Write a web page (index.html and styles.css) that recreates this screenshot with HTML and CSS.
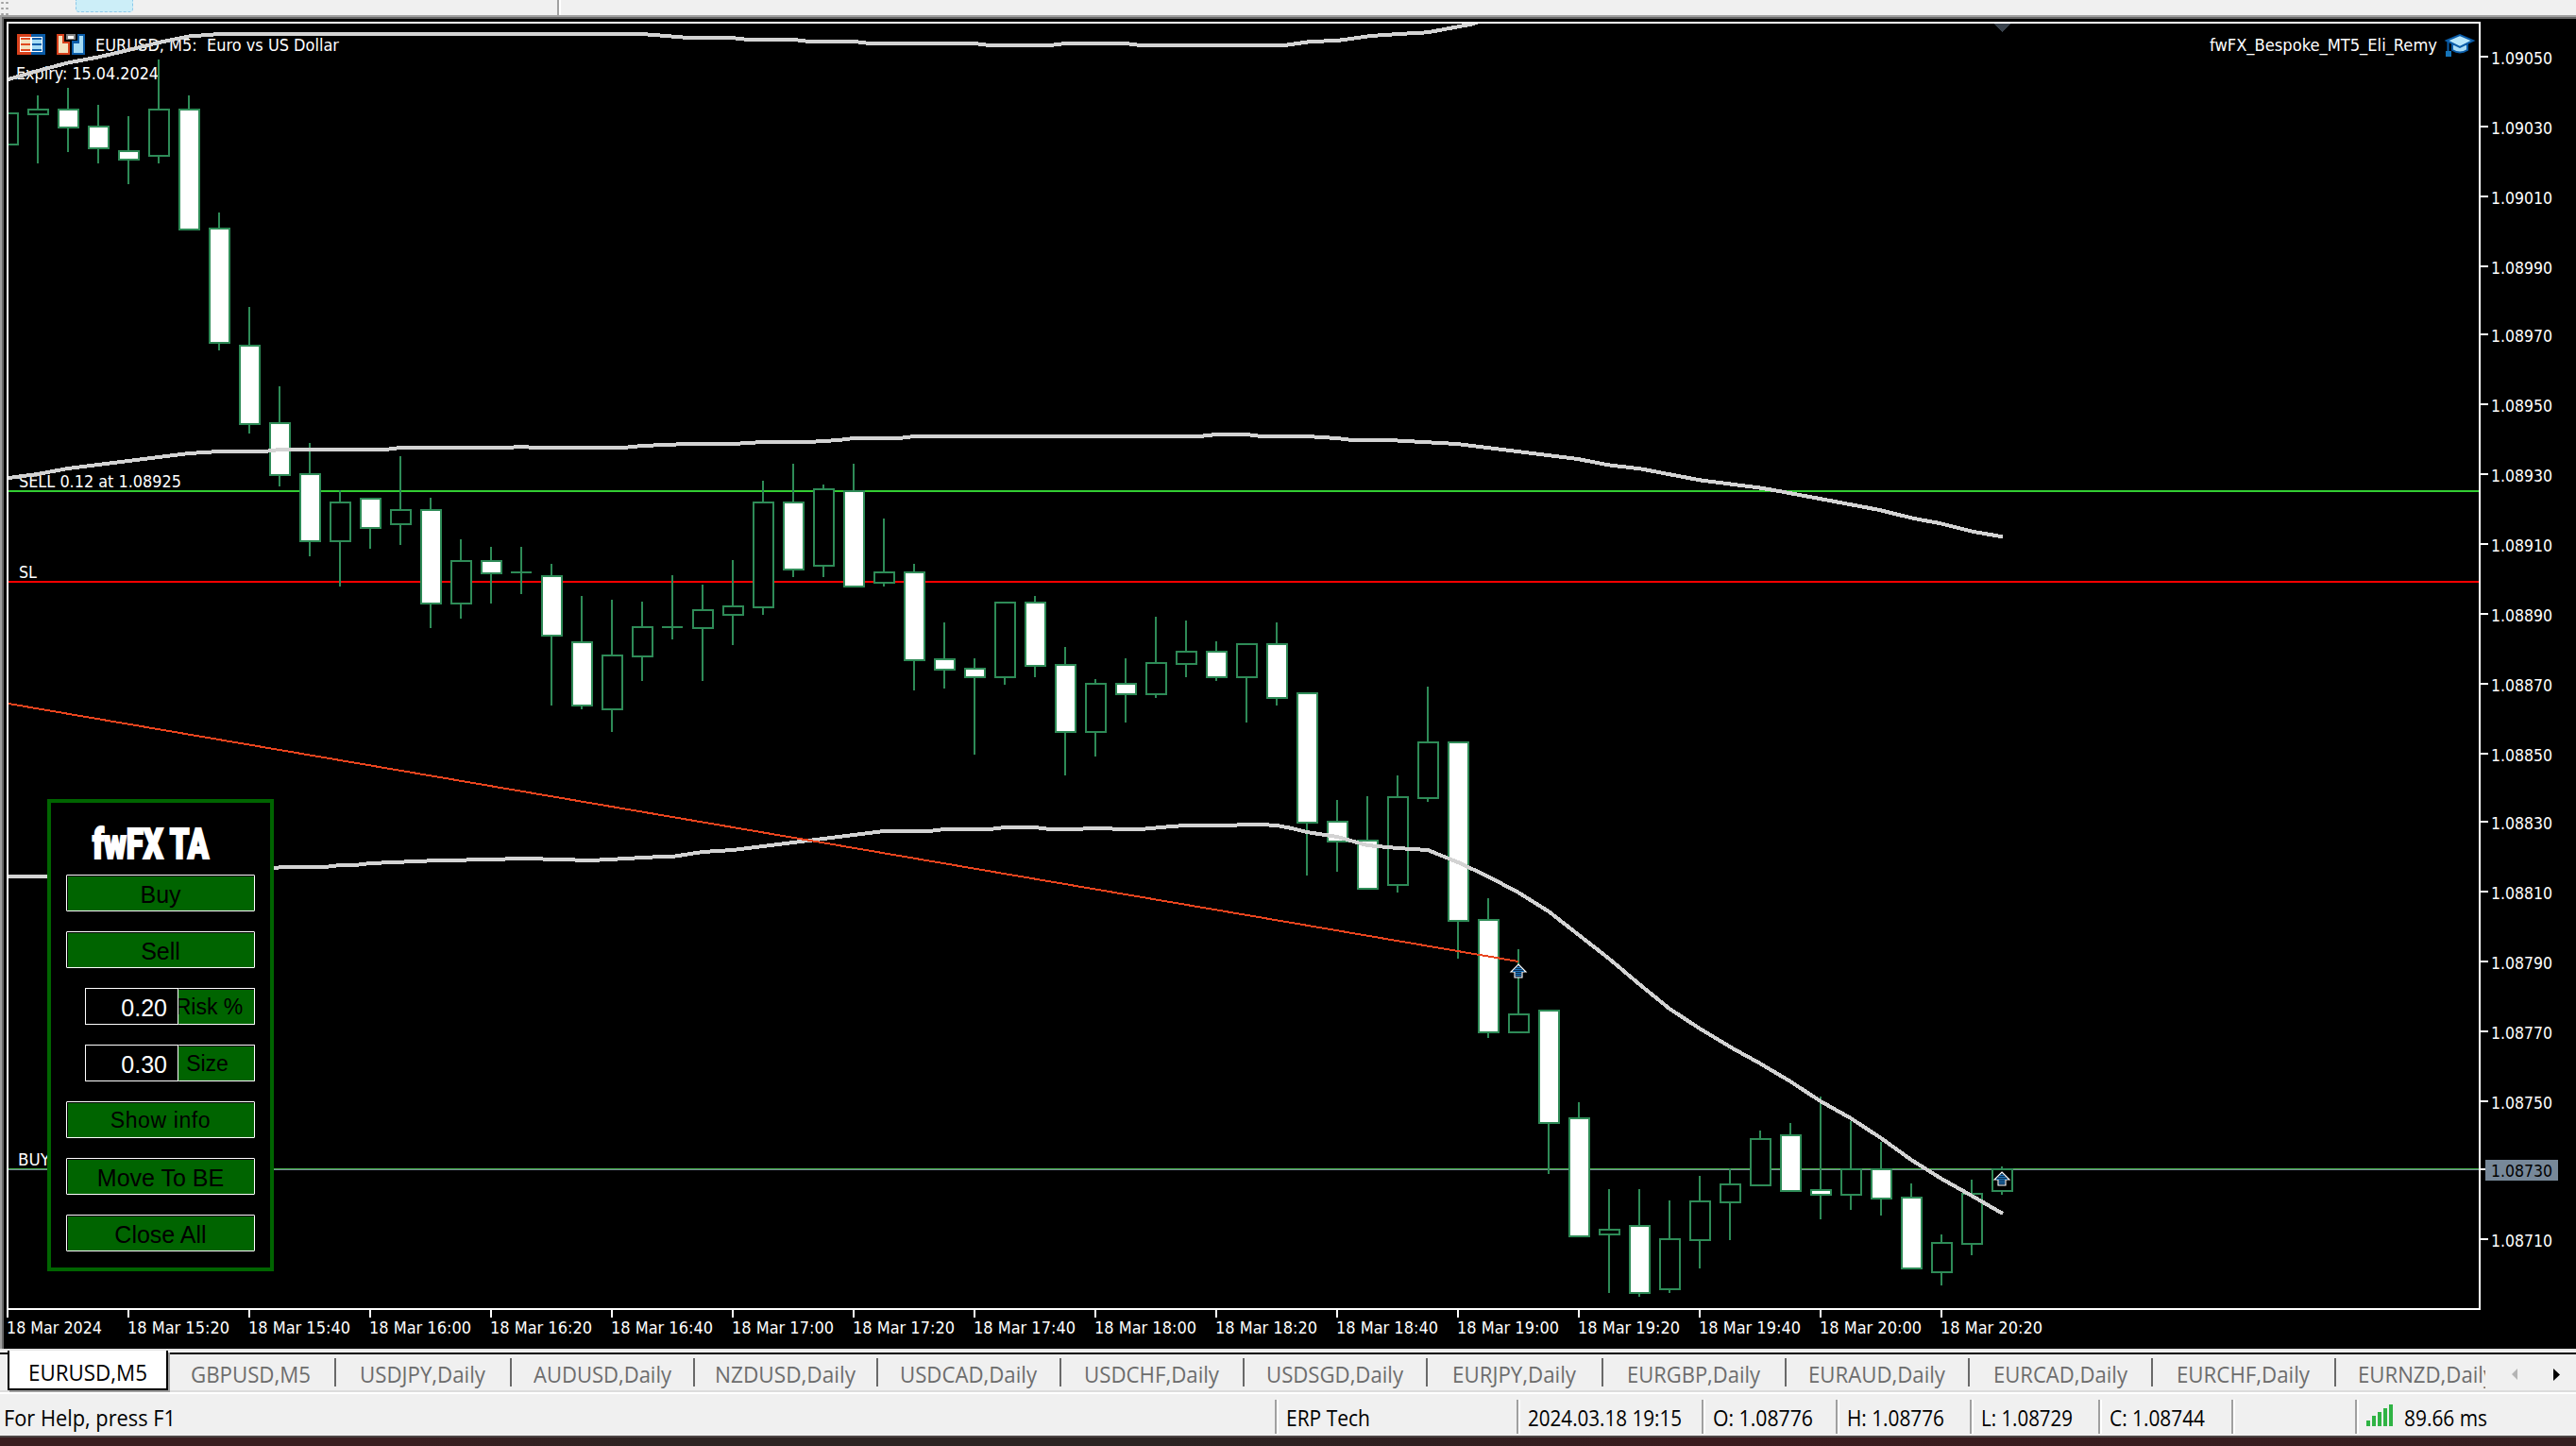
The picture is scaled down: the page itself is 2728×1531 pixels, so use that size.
FILE: index.html
```html
<!DOCTYPE html>
<html lang="en">
<head>
<meta charset="utf-8">
<title>EURUSD,M5</title>
<link rel="stylesheet" href="styles.css">
</head>
<body>
<div class="app">
  <div class="toolbar">
    <span class="grip"></span>
    <span class="tool-active"></span>
    <span class="tool-separator"></span>
  </div>

  <main class="chart-window">
    <svg class="chart" viewBox="0 18 2728 1410" width="2728" height="1410">
      <clipPath id="plot"><rect x="9" y="25" width="2616" height="1360"/></clipPath>
      <g class="crisp">
        <rect x="0" y="18" width="2728" height="2" fill="#696969"/>
        <rect x="0" y="18" width="2" height="1410" fill="#a0a0a0"/>
        <rect x="2" y="18" width="2" height="1410" fill="#696969"/>
        <path d="M2111 25H2129L2120 34Z" fill="#39424c"/>
        <rect x="9" y="519" width="2616" height="2" fill="#32cd32"/>
        <rect x="9" y="615" width="2616" height="2" fill="#ff0000"/>
        <rect x="9" y="1237" width="2616" height="1" fill="#48b14c"/>
        <rect x="9" y="1238" width="2616" height="1" fill="#778899"/>
      </g>
      <g class="labels">
        <text x="101" y="54" textLength="258" xml:space="preserve">EURUSD, M5:  Euro vs US Dollar</text>
        <text x="17" y="84" textLength="151">Expiry: 15.04.2024</text>
        <text x="2340" y="54" textLength="241">fwFX_Bespoke_MT5_Eli_Remy</text>
        <text x="20" y="516" textLength="172">SELL 0.12 at 1.08925</text>
        <text x="20" y="612" textLength="19">SL</text>
        <text x="19" y="1234" textLength="34">BUY</text>
      </g>
      <g id="candles" class="crisp" clip-path="url(#plot)"></g>
      <g class="crisp averages" clip-path="url(#plot)">
        <polyline points="9,84 40,75 72,66.5 104,60.5 136,53 168,45 200,38.5 232,36 680,36 705,38 729,40 775,40 792,42 841,42 857,44 905,44 921,46 1032,46 1048,48 1112,48 1128,46 1192,46 1208,48 1360,48 1386,44.3 1418,42.7 1452,38 1481,36 1512,34.3 1558,25.7 1566,23"/>
        <polyline points="9,506 40,502 72,496 104,492 136,488 168,484 200,480 232,478 280,478 296,476 408,476 424,474 536,474 552,473 568,474 660,474 680,472 728,470 776,470 808,468 856,468 888,466 904,464 952,464 968,462 1270,462 1288,460 1320,460 1336,462 1384,462 1416,464 1432,466 1480,466.5 1543,470 1671,486 1703,492.3 1737,496.3 1800,508.3 1865,516.7 1884,520 1934,529.3 1989,539.7 2027,549 2054,554 2090,563 2121,568.3"/>
        <polyline points="9,928 50,928 200,924 290,919 300,918 344,918 360,916 376,916 392,914 452,911.5 557,909 626,911 700,907 712,907 744,902 776,900 840,892 904,884 936,880 984,880 1000,878 1048,878 1064,876 1096,876 1112,878 1144,878 1150,877 1176,877 1180,878 1208,878 1240,875 1256,874 1300,874 1320,873 1336,873 1352,874 1368,877 1384,881 1416,886 1448,895 1480,898 1512,900 1544,913 1576,928 1608,945 1640,965 1672,990 1704,1015 1736,1042 1768,1068 1800,1089 1835,1110 1864,1126 1896,1145 1928,1166 1960,1184 1992,1205 2024,1228 2056,1248 2088,1266 2121,1285"/>
      </g>
      <line class="crisp" x1="9" y1="745" x2="1608" y2="1018" stroke="#e9441e" stroke-width="2"/>
      <g id="arrows"></g>

      <g class="crisp" fill="#ffffff">
        <rect x="7" y="23" width="2620" height="2"/>
        <rect x="7" y="23" width="2" height="1364"/>
        <rect x="2625" y="23" width="2" height="1364"/>
        <rect x="7" y="1385" width="2620" height="2"/>
        <g id="ticks"></g>
        <rect x="2632" y="1228" width="77" height="22" fill="#778899"/>
        <rect x="2627" y="1237" width="5" height="2"/>
      </g>
      <g id="axis-labels" class="labels"></g>
      <text class="labels price-now" x="2638" y="1246" textLength="65">1.08730</text>

      <g class="crisp">
        <path fill="#d8411c" d="M18 36H33V58H18Z"/>
        <path fill="#0a5ca8" d="M33 36H48V58H33Z"/>
        <path fill="#fff" d="M21 39H45V55H21Z"/>
        <path fill="#f3e3c0" d="M22 42H32V46H22ZM22 48H32V52H22Z"/>
        <path fill="#a6dcf5" d="M34 42H44V46H34ZM34 48H44V52H34Z"/>
        <path fill="#e04a20" d="M22 40H32V42H22ZM22 46H32V48H22ZM22 52H32V54H22Z"/>
        <path fill="#0a5ca8" d="M34 40H44V42H34ZM34 46H44V48H34ZM34 52H44V54H34Z"/>
        <path fill="#d8411c" d="M60 36H68V44H74V58H60Z"/>
        <path fill="#f3e3c0" d="M62 38H66V46H72V56H62Z"/>
        <path fill="#0a5ca8" d="M90 36H82V43H76V58H90Z"/>
        <path fill="#a6dcf5" d="M88 38H84V46H78V56H88Z"/>
        <path fill="#808080" d="M70 36H80V42H70Z"/>
        <path fill="#fff" d="M72 38H78V41H72Z"/>
      </g>
      <g>
        <path d="M2597 47V53Q2605 58 2613 53V47Z" fill="#a9dcf5" stroke="#0a5ca8" stroke-width="2"/>
        <path d="M2591 43L2605 37L2619 43L2605 50Z" fill="#b8e6fa" stroke="#0a5ca8" stroke-width="2"/>
        <path d="M2592.500 43V54" stroke="#0a5ca8" stroke-width="2"/>
        <rect x="2590" y="54" width="6" height="6" fill="#1574b8"/>
      </g>
    </svg>

    <section class="panel">
      <svg class="panel-title" width="232" height="76"><text x="44" y="58.500" textLength="123" lengthAdjust="spacingAndGlyphs">fwFX TA</text></svg>
      <div class="panel-rows">
        <button class="btn">Buy</button>
        <button class="btn">Sell</button>
        <div class="field"><span class="value">0.20</span><span class="btn unit unit-clipped">Risk %</span></div>
        <div class="field"><span class="value">0.30</span><span class="btn unit">Size</span></div>
        <button class="btn small">Show info</button>
        <button class="btn">Move To BE</button>
        <button class="btn">Close All</button>
      </div>
    </section>
  </main>

  <nav class="tabs">
    <div class="tab-list" id="tabs"></div>
    <svg class="tab-arrows" width="96" height="38"><path d="M34 15L28 21L34 27Z" fill="#b4b4b4"/><path d="M72 15L79 21.500L72 28Z" fill="#000"/></svg>
  </nav>

  <footer class="status" id="status"></footer>
  <div class="taskbar"></div>
</div>
<script src="chart.js"></script>
</body>
</html>
```
FILE: styles.css
```css
* { box-sizing: border-box; }

body { margin: 0; background: #000; overflow: hidden; font-family: "Open Sans", "Noto Sans", sans-serif; }

.app { display: flex; flex-direction: column; width: 2728px; height: 1531px; }

.toolbar { display: flex; height: 18px; background: #f0f0f0; border-bottom: 2px solid #a0a0a0; }
.grip {
  width: 9px;
  background: radial-gradient(circle, #a0a0a0 1px, transparent 1.5px) 0 0 / 5px 6px;
}
.tool-active {
  width: 61px; height: 13px; margin-left: 71px;
  background: #cceef8; border: 1px dashed #8cc8ea; border-top: 0; border-radius: 0 0 4px 4px;
}
.tool-separator { width: 4px; margin-left: 449px; border-left: 2px solid #a0a0a0; border-right: 2px solid #fff; }

.chart-window { position: relative; height: 1410px; background: #000; }
.chart { display: block; }
.crisp { shape-rendering: crispEdges; }
.labels { fill: #fff; font: 18px "DejaVu Sans Condensed", "DejaVu Sans", sans-serif; }
.price-now { fill: #000; }
.averages polyline { fill: none; stroke: #d3d3d3; stroke-width: 4; }
.wick { fill: #2e8b57; }
.body { stroke: #2e8b57; stroke-width: 2; }

.panel {
  position: absolute; left: 50px; top: 828px; width: 240px; height: 500px;
  border: 4px solid #006400; background: #000;
  font-family: "Liberation Sans", Arial, sans-serif;
}
.panel-title { display: block; }
.panel-title text { font: 900 44px Roboto, sans-serif; fill: #fff; stroke: #fff; stroke-width: 2.2; }
.panel-rows { display: flex; flex-direction: column; gap: 21px; padding-left: 16px; }
.btn {
  display: flex; align-items: center; justify-content: center;
  width: 200px; height: 39px; padding: 4px 0 0;
  border: 1px solid #fff; border-radius: 1px; background: #006400; color: #000;
  box-shadow: inset 1px 1px 0 #000;
  font: 25px "Liberation Sans", Arial, sans-serif;
}
.small { font-size: 23px; letter-spacing: 0.6px; padding-top: 2px; }
.field { display: flex; width: 180px; margin-left: 20px; }
.value {
  width: 99px; height: 39px; padding: 1px 11px 0 0; border: 1px solid #fff;
  color: #fff; font-size: 25px; line-height: 38px; text-align: right;
}
.unit { width: 81px; border-left: 0; padding: 2px 19px 0 0; font-size: 23px; overflow: hidden; box-shadow: inset 0 1px 0 #000; }
.unit-clipped { padding-right: 15px; white-space: nowrap; }

.tabs {
  display: flex; justify-content: space-between; height: 48px; background: #f0f0f0;
  border-top: 2px solid #e3e3e3; border-bottom: 2px solid #fff;
  box-shadow: inset 0 2px #fff, inset 0 4px #000, inset 0 -2px #dcdcdc;
}
.tab-list { display: flex; width: 2632px; padding: 0 0 2px 8px; overflow: hidden; }
.tab {
  display: flex; flex: none; align-items: center; justify-content: center;
  height: 30px; margin-top: 8px; padding: 3px 1px 0 0;
  border-right: 2px solid #696969; color: #6d6d6d; font-size: 23px;
}
.tab.last { justify-content: flex-start; padding-left: 23px; }
.tab.active {
  height: 42px; margin-top: 0; padding: 6px 1px 0 0;
  background: #fff; color: #000; border: solid #000; border-width: 0 2px 2px;
  box-shadow: 2px 2px #a0a0a0;
}
.fit { display: inline-block; flex: none; white-space: pre; line-height: 30px; }
.tab-arrows { margin-top: 4px; }

.status { display: flex; height: 44px; background: #f0f0f0; font-size: 23px; color: #000; }
.cell { display: flex; align-items: center; flex: none; height: 36px; margin-top: 6px; padding: 2px 0 0 10px; border-left: 2px solid #a0a0a0; box-shadow: inset 2px 0 #fff; }
.cell.first { border-left: 0; padding-left: 4px; box-shadow: none; }
.signal { width: 32px; height: 24px; margin: 0 8px 4px 0; }

.taskbar { flex: 1; border-top: 2px solid #4d4545; background: linear-gradient(90deg, #3a1e20 0, #3a1e20 16%, #2e2322 25%, #2c2322 45%, #301f20 55%, #3b1b1e 66%, #361e20 100%); }
```
FILE: chart.js
```js
const NS = "http://www.w3.org/2000/svg";
function svg(parent, name, attrs, text) {
  const el = document.createElementNS(NS, name);
  for (const key in attrs) el.setAttribute(key, attrs[key]);
  if (text) el.textContent = text;
  parent.appendChild(el);
  return el;
}
const byId = (id) => document.getElementById(id);

// One bar per row: high, body top, body bottom, low, falling (1) or rising (0).
const bars = [
  [119,119,154,154,0],[101,115,122,173,0],[93,115,136,161,1],[111,133,158,173,1],[123,159,170,195,1],
  [63,115,166,173,0],[101,115,244,244,1],[225,241,364,371,1],[325,365,450,459,1],[409,447,504,515,1],
  [469,501,574,589,1],[519,531,574,621,0],[527,527,560,581,1],[483,539,556,577,0],[527,539,640,665,1],
  [571,593,640,655,0],[579,593,608,639,1],[579,605,607,629,0],[597,609,674,747,1],[631,679,748,751,1],
  [635,693,752,775,0],[637,663,696,721,0],[609,663,665,677,0],[619,645,666,721,0],[593,641,652,683,0],
  [509,531,644,651,0],[491,531,604,611,1],[513,517,600,611,0],[491,519,622,622,1],[549,605,618,621,0],
  [597,605,700,731,1],[659,697,710,729,1],[697,707,718,799,1],[637,637,718,725,0],[631,637,706,717,1],
  [685,703,776,821,1],[719,723,776,801,0],[697,723,736,765,1],[653,701,736,739,0],[657,689,704,717,0],
  [679,689,718,721,1],[681,681,718,765,0],[659,681,740,747,1],[733,733,872,927,1],[847,869,892,923,1],
  [843,889,942,942,1],[821,843,938,945,0],[727,785,846,849,0],[785,785,976,1015,1],[951,973,1094,1099,1],
  [1005,1073,1094,1094,0],[1069,1069,1190,1243,1],[1167,1183,1310,1310,1],[1259,1301,1308,1369,0],
  [1259,1297,1370,1373,1],[1271,1311,1366,1369,0],[1245,1271,1314,1343,0],[1237,1253,1274,1313,0],
  [1197,1205,1256,1256,0],[1189,1201,1262,1262,1],[1161,1259,1266,1291,1],[1187,1237,1266,1281,0],
  [1209,1237,1270,1287,1],[1253,1267,1344,1344,1],[1307,1315,1348,1361,0],[1249,1263,1318,1329,0],
  [1235,1237,1262,1265,0]
];
bars.forEach(([high, top, bottom, low, falling], i) => {
  const x = 8 + i * 32;
  const g = byId("candles");
  svg(g, "rect", { class: "wick", x: x - 1, y: high, width: 2, height: low - high });
  if (bottom - top <= 2) {
    svg(g, "rect", { class: "wick", x: x - 11, y: top, width: 22, height: 2 });
  } else {
    svg(g, "rect", { class: "body", x: x - 10, y: top + 1, width: 21, height: bottom - top - 2, fill: falling ? "#fff" : "#000" });
  }
});

// Buy arrows.
[[1608, 1020], [2120, 1240]].forEach(([x, y]) => {
  svg(byId("arrows"), "path", {
    d: `M${x} ${y + 1}L${x + 8} ${y + 9}H${x + 4}V${y + 15}H${x - 4}V${y + 9}H${x - 8}Z`,
    fill: "#0a2c50", stroke: "#fff", "stroke-width": 1.1
  });
  for (let k = 4; k < 14; k += 2) {
    const half = k < 9 ? k - 2 : 3;
    svg(byId("arrows"), "rect", { x: x - half, y: y + k, width: half * 2, height: 1, fill: "#1f78bd" });
  }
});

// Price scale; label rows snap to even pixels.
for (let i = 0; i <= 17; i++) {
  if (i === 16) continue;
  const y = 2 * Math.round(30 + i * 36.85);
  svg(byId("ticks"), "rect", { x: 2627, y: y - 1, width: 8, height: 2 });
  svg(byId("axis-labels"), "text", { x: 2638, y: y + 8, textLength: 65 }, (1.0905 - i * 0.0002).toFixed(5));
}

// Time scale, a label every 20 minutes.
for (let i = 0; i <= 16; i++) {
  const x = 8 + i * 128;
  const minutes = 15 * 60 + i * 20;
  const time = String(Math.floor(minutes / 60)) + ":" + String(minutes % 60).padStart(2, "0");
  svg(byId("ticks"), "rect", { x: x - 1, y: 1387, width: 2, height: 8 });
  svg(byId("axis-labels"), "text", { x: x - 1, y: 1412, textLength: i ? 108 : 101 }, i ? "18 Mar " + time : "18 Mar 2024");
}
document.querySelectorAll(".labels text, text.labels").forEach((t) => t.setAttribute("lengthAdjust", "spacingAndGlyphs"));

// Text set to a given width by scaling it horizontally.
function fitted(parent, text, width) {
  const el = document.createElement("span");
  el.className = "fit";
  el.textContent = text;
  parent.appendChild(el);
  const natural = el.getBoundingClientRect().width;
  el.style.transformOrigin = "0 50%";
  el.style.transform = `scaleX(${width / natural})`;
  el.style.marginRight = `${width - natural}px`;
}

// Tabs: symbol, tab width, text width.
[["EURUSD,M5",170,126],["GBPUSD,M5",178,127],["USDJPY,Daily",186,133],["AUDUSD,Daily",194,146],
 ["NZDUSD,Daily",194,149],["USDCAD,Daily",194,145],["USDCHF,Daily",194,143],["USDSGD,Daily",194,145],
 ["EURJPY,Daily",186,131],["EURGBP,Daily",194,141],["EURAUD,Daily",194,145],["EURCAD,Daily",194,142],
 ["EURCHF,Daily",194,141],["EURNZD,Daily",200,144]].forEach(([name, width, textWidth], i, all) => {
  const tab = document.createElement("div");
  tab.className = "tab" + (i === 0 ? " active" : "") + (i === all.length - 1 ? " last" : "");
  tab.style.width = width + "px";
  byId("tabs").appendChild(tab);
  fitted(tab, name, textWidth);
});

// Status bar: text, cell width, text width.
[["For Help, press F1",1350,182],["ERP Tech",256,89],["2024.03.18 19:15",196,163],["O: 1.08776",142,106],
 ["H: 1.08776",142,103],["L: 1.08729",136,97],["C: 1.08744",141,101],["",131,0],["89.66 ms",234,88]
].forEach(([text, width, textWidth], i, all) => {
  const cell = document.createElement("div");
  cell.className = "cell" + (i === 0 ? " first" : "");
  cell.style.width = width + "px";
  byId("status").appendChild(cell);
  if (i === all.length - 1) {
    const icon = svg(cell, "svg", { class: "signal", width: 32, height: 24 });
    [6, 11, 15, 19, 23].forEach((h, k) => svg(icon, "rect", { x: k * 6, y: 23 - h, width: 4, height: h, fill: "#2fb344" }));
  }
  if (text) fitted(cell, text, textWidth);
});
```
